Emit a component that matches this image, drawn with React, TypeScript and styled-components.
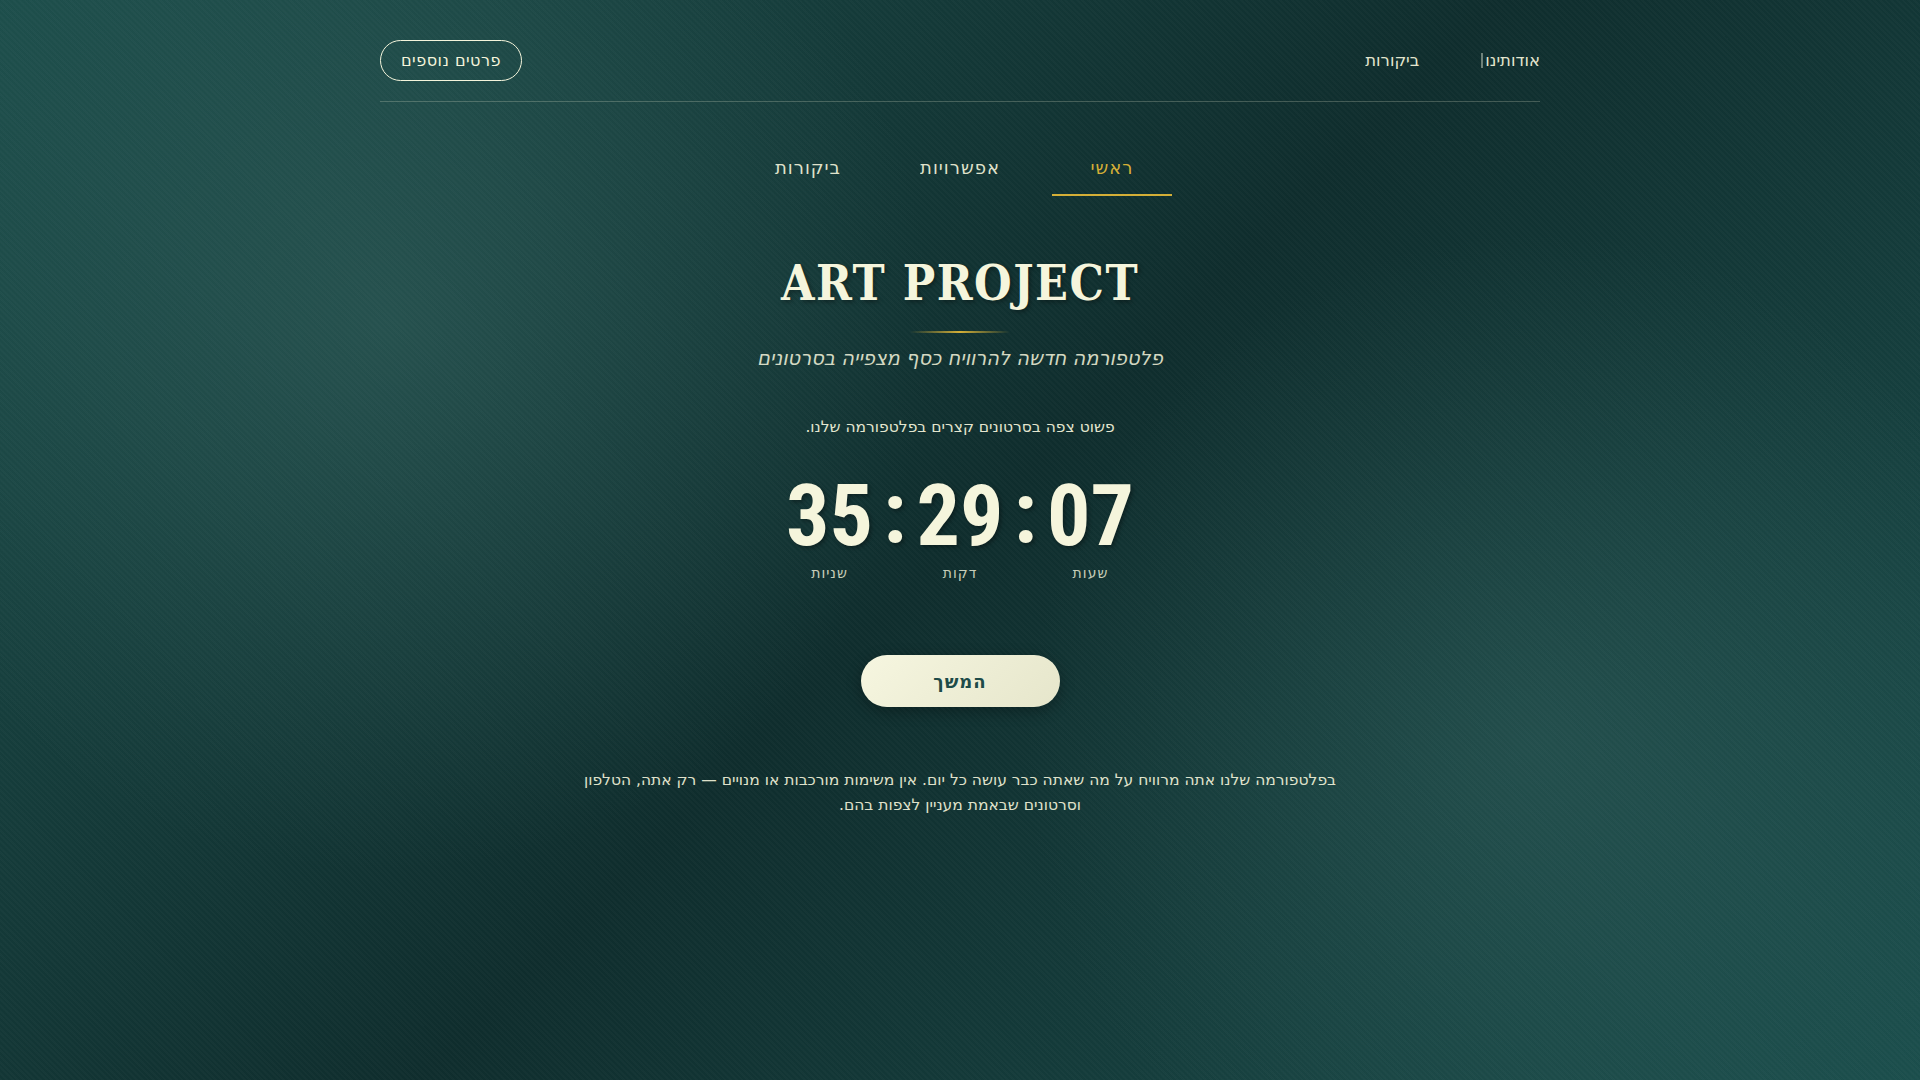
import React from "react";
import styled, { createGlobalStyle } from "styled-components";

const cream = "#f5f5dc";
const gold = "#d4af37";

const Global = createGlobalStyle`
  html, body { margin: 0; padding: 0; }
  body {
    min-height: 100vh;
    font-family: "DejaVu Sans", "Liberation Sans", sans-serif;
    color: ${cream};
    background:
      repeating-linear-gradient(45deg, rgba(255,255,255,0.018) 0 2px, transparent 2px 4px),
      radial-gradient(circle at 20% 30%, rgba(70,120,115,0.33), transparent 32%),
      radial-gradient(circle at 80% 69%, rgba(70,120,115,0.28), transparent 30%),
      linear-gradient(135deg, #1c4d4a 0%, #0f2d2d 50%, #1b4e4c 100%);
    background-attachment: fixed;
  }
`;

const Page = styled.div`
  min-height: 100vh;
  direction: rtl;
`;

const Container = styled.div`
  max-width: 1160px;
  margin: 0 auto;
  display: flex;
  flex-direction: column;
  align-items: center;
`;

const Header = styled.header`
  width: 100%;
  display: flex;
  justify-content: space-between;
  align-items: center;
  padding: 40px 0 20px;
  border-bottom: 1px solid rgba(245, 245, 220, 0.22);
`;

const Nav = styled.nav`
  display: flex;
  align-items: center;
  gap: 62px;
`;

const NavLink = styled.a`
  display: flex;
  align-items: center;
  gap: 2px;
  font-size: 16.5px;
  color: ${cream};
  text-decoration: none;
  opacity: 0.92;
`;

const Caret = styled.span`
  display: inline-block;
  width: 2px;
  height: 15px;
  background: rgba(200, 210, 195, 0.55);
`;

const OutlineButton = styled.button`
  font-family: inherit;
  font-size: 16px;
  line-height: 19px;
  color: ${cream};
  background: transparent;
  border: 1px solid ${cream};
  border-radius: 999px;
  padding: 10px 20px;
  letter-spacing: 0.5px;
`;

const Tabs = styled.div`
  display: flex;
  gap: 32px;
  margin-top: 42px;
`;

const Tab = styled.div<{ $active?: boolean }>`
  width: 120px;
  text-align: center;
  font-size: 18px;
  line-height: 27px;
  letter-spacing: 1px;
  padding: 10px 0 13px;
  color: ${(p) => (p.$active ? gold : cream)};
  border-bottom: 2px solid ${(p) => (p.$active ? gold : "transparent")};
  opacity: ${(p) => (p.$active ? 1 : 0.9)};
`;

const Title = styled.h1`
  margin: 57px 0 0;
  font-family: "DejaVu Serif Condensed", "DejaVu Serif", serif;
  font-stretch: condensed;
  font-weight: 700;
  font-size: 48px;
  line-height: 60px;
  letter-spacing: 1.5px;
  direction: ltr;
  color: ${cream};
  text-shadow: 2px 2px 4px rgba(0, 0, 0, 0.35);
`;

const GoldLine = styled.div`
  width: 100px;
  height: 2px;
  margin-top: 18px;
  background: linear-gradient(90deg, transparent, ${gold}, transparent);
`;

const Subtitle = styled.p`
  margin: 9px 0 0;
  font-size: 19.5px;
  line-height: 33px;
  font-style: italic;
  color: ${cream};
  opacity: 0.85;
`;

const Description = styled.p`
  margin: 40px 0 0;
  font-size: 15.5px;
  line-height: 24px;
  color: ${cream};
  opacity: 0.92;
`;

const Countdown = styled.div`
  display: flex;
  align-items: flex-start;
  gap: 10px;
  margin-top: 33px;
`;

const Unit = styled.div`
  display: flex;
  flex-direction: column;
  align-items: center;
`;

const Digits = styled.span`
  font-family: "Roboto Condensed", "Roboto", "Liberation Sans", sans-serif;
  font-stretch: condensed;
  font-weight: 700;
  font-size: 86px;
  line-height: 88px;
  color: ${cream};
  text-shadow: 2px 2px 4px rgba(0, 0, 0, 0.35);
  direction: ltr;
`;

const Colon = styled(Digits)`
  line-height: 84px;
`;

const UnitLabel = styled.span`
  margin-top: 3px;
  font-size: 14px;
  line-height: 20px;
  letter-spacing: 1px;
  color: ${cream};
  opacity: 0.8;
`;

const PrimaryButton = styled.button`
  margin-top: 72px;
  width: 199px;
  height: 52px;
  border: none;
  border-radius: 999px;
  font-family: inherit;
  font-size: 18px;
  font-weight: 700;
  letter-spacing: 1px;
  color: #1d4b48;
  background: linear-gradient(135deg, #f6f6e0, #e6e6cb);
  box-shadow: 0 4px 15px rgba(0, 0, 0, 0.3);
`;

const Paragraph = styled.p`
  margin: 61px 0 0;
  max-width: 760px;
  text-align: center;
  font-size: 15.5px;
  line-height: 25px;
  color: ${cream};
  opacity: 0.9;
`;

export default function App() {
  return (
    <Page dir="rtl">
      <Global />
      <Container>
        <Header>
          <Nav>
            <NavLink href="#">
              אודותינו
              <Caret />
            </NavLink>
            <NavLink href="#">ביקורות</NavLink>
          </Nav>
          <OutlineButton>פרטים נוספים</OutlineButton>
        </Header>

        <Tabs>
          <Tab $active>ראשי</Tab>
          <Tab>אפשרויות</Tab>
          <Tab>ביקורות</Tab>
        </Tabs>

        <Title>ART PROJECT</Title>
        <GoldLine />
        <Subtitle>פלטפורמה חדשה להרוויח כסף מצפייה בסרטונים</Subtitle>

        <Description>פשוט צפה בסרטונים קצרים בפלטפורמה שלנו.</Description>

        <Countdown>
          <Unit>
            <Digits>07</Digits>
            <UnitLabel>שעות</UnitLabel>
          </Unit>
          <Colon>:</Colon>
          <Unit>
            <Digits>29</Digits>
            <UnitLabel>דקות</UnitLabel>
          </Unit>
          <Colon>:</Colon>
          <Unit>
            <Digits>35</Digits>
            <UnitLabel>שניות</UnitLabel>
          </Unit>
        </Countdown>

        <PrimaryButton>המשך</PrimaryButton>

        <Paragraph>
          בפלטפורמה שלנו אתה מרוויח על מה שאתה כבר עושה כל יום. אין משימות מורכבות או מנויים — רק
          אתה, הטלפון וסרטונים שבאמת מעניין לצפות בהם.
        </Paragraph>
      </Container>
    </Page>
  );
}
